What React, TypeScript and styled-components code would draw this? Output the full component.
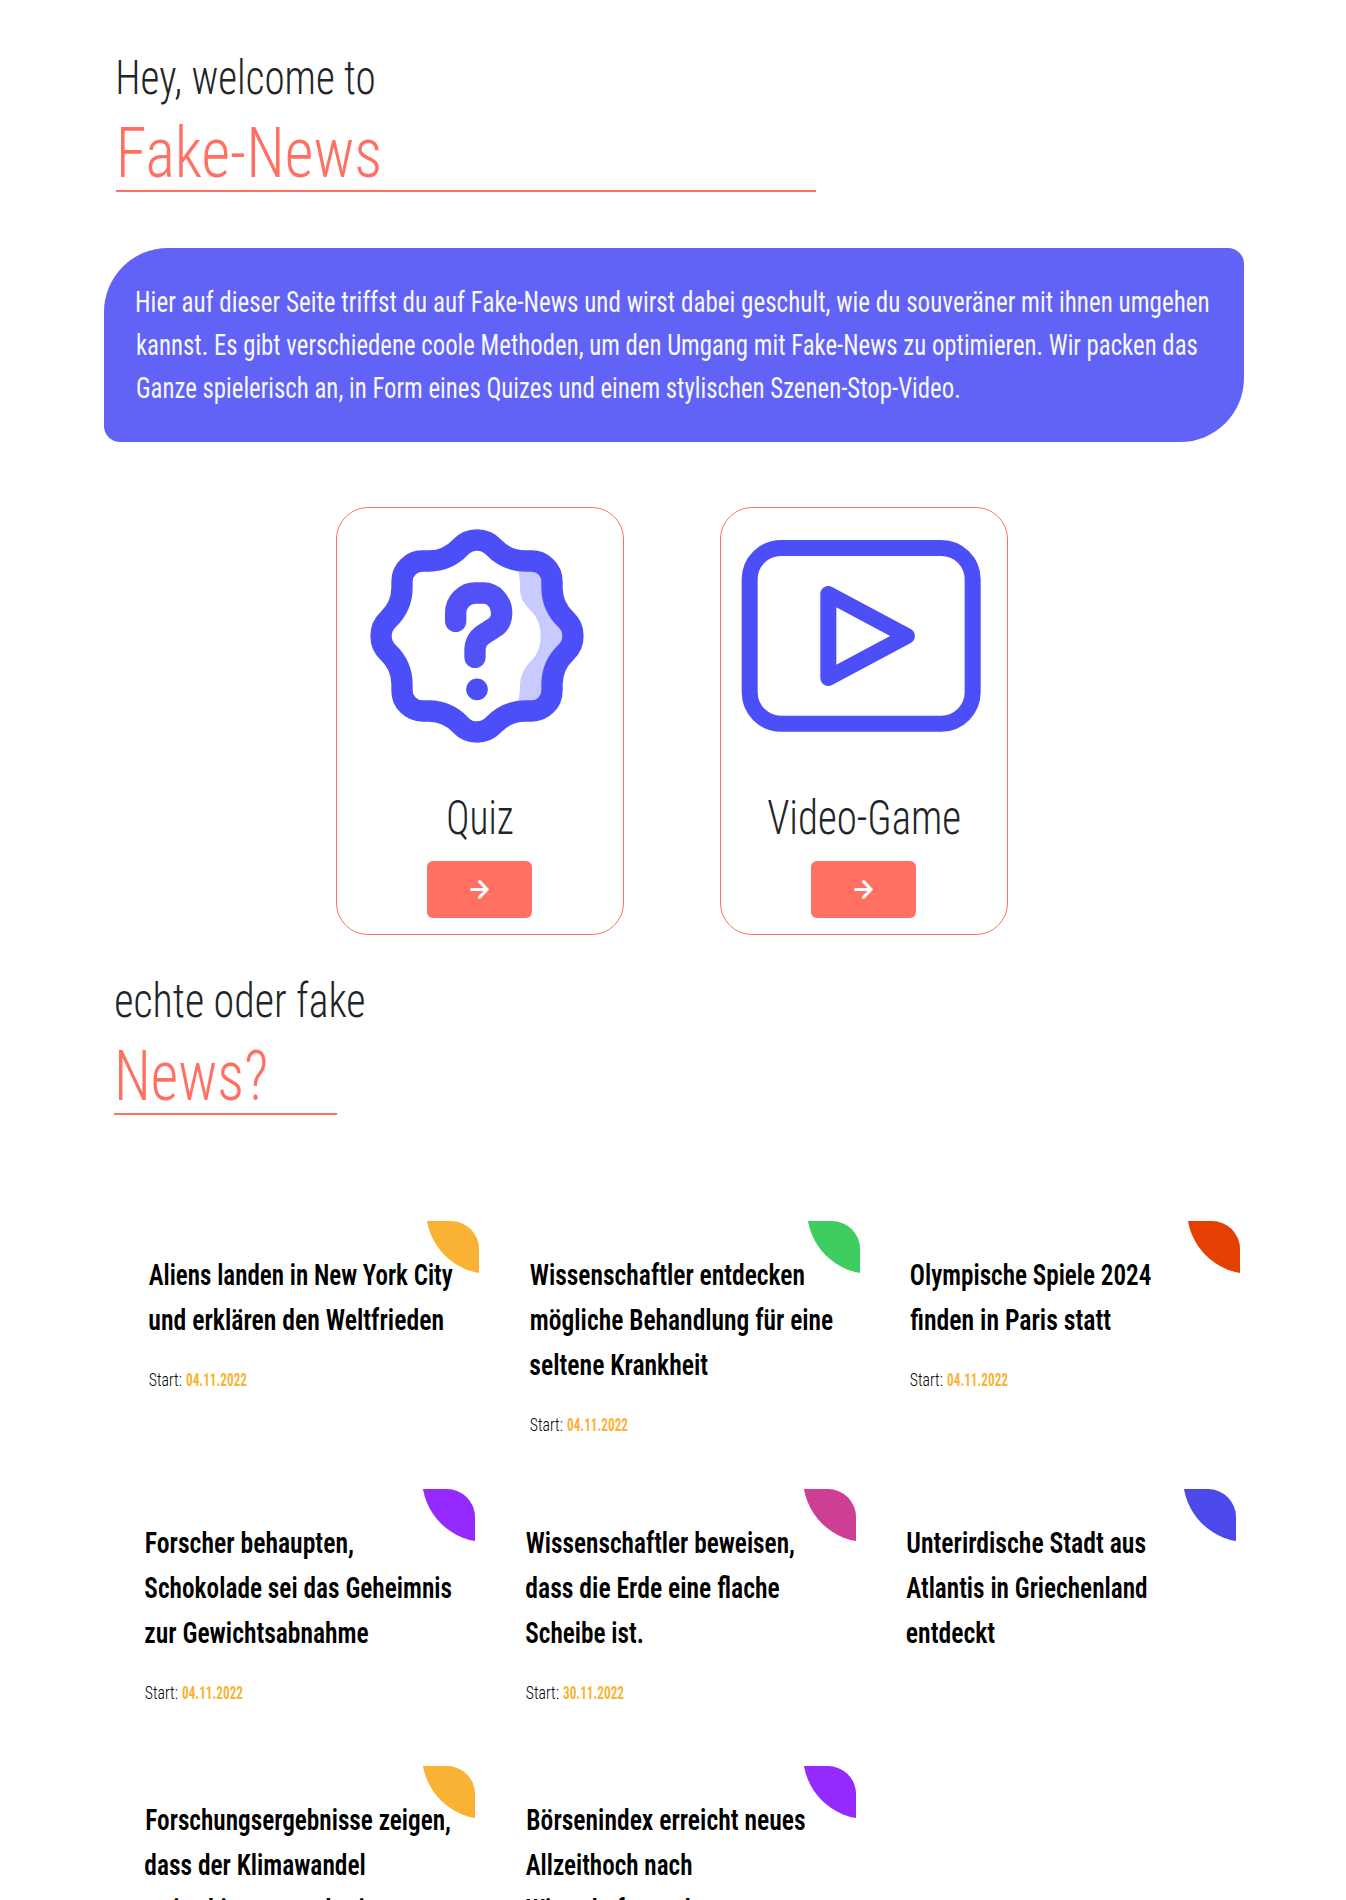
import React, { useLayoutEffect, useRef, useState } from "react";
import styled, { createGlobalStyle } from "styled-components";

const GlobalStyle = createGlobalStyle`
  *, *::before, *::after { box-sizing: border-box; }
  html, body { margin: 0; background: #fff; }
  body { font-family: "Roboto Condensed", Roboto, "Liberation Sans", sans-serif; color: #212529; height: 1900px; overflow: hidden; }
  h1, h2, h3, p { margin: 0; font-weight: inherit; }
`;

const coral = "#ff7062";
const indigo = "#4c4ef7";

/* One line of condensed type: the glyphs are narrowed to the given ink width. */
const LineBox = styled.span`
  display: block;
  white-space: nowrap;
  height: 1lh;
`;

const LineInk = styled.span`
  display: inline-block;
  transform-origin: 0 0;
`;

function Line({ w, off = 0, children }: { w: number; off?: number; children: string }) {
  const ref = useRef<HTMLSpanElement>(null);
  const [transform, setTransform] = useState("none");
  useLayoutEffect(() => {
    const el = ref.current;
    const ctx = document.createElement("canvas").getContext("2d");
    if (!el || !ctx) return;
    const cs = getComputedStyle(el);
    ctx.font = `${cs.fontWeight} ${cs.fontSize} ${cs.fontFamily}`;
    const m = ctx.measureText(children);
    const scale = w / (m.actualBoundingBoxLeft + m.actualBoundingBoxRight);
    const x = off + m.actualBoundingBoxLeft * scale;
    const y = parseFloat(cs.fontSize) * 0.065;
    setTransform(`translate(${x}px, ${y}px) scaleX(${scale})`);
  }, [w, off, children]);
  return (
    <LineBox>
      <LineInk ref={ref} style={{ transform }}>{children}</LineInk>
    </LineBox>
  );
}

const Page = styled.main`
  display: flex;
  flex-direction: column;
  width: 1346px;
  height: 1900px;
  overflow: hidden;
  > * { flex-shrink: 0; }
`;

const Heading = styled.header<{ $left: number; $width: number; $top: number }>`
  margin: ${(p) => p.$top}px 0 0 ${(p) => p.$left}px;
  width: ${(p) => p.$width}px;
  height: 145px;
  border-bottom: 2px solid ${coral};
  font-weight: 300;
`;

const Kicker = styled.h2`
  height: 58px;
  font-size: 47.3px;
  line-height: 56px;
`;

const Title = styled.h1`
  font-size: 71px;
  line-height: 86px;
  height: 85px;
  color: ${coral};
`;

const Intro = styled.section`
  margin: 56px 0 0 104px;
  width: 1140px;
  height: 194px;
  padding: 31px 32px;
  border-radius: 64px 16px;
  background: #6162f6;
  color: #f8f8ff;
  font-size: 29px;
  line-height: 43px;
`;

const Games = styled.section`
  display: flex;
  gap: 96px;
  margin: 65px 0 0 336px;
`;

const GameCard = styled.article`
  display: flex;
  flex-direction: column;
  align-items: center;
  width: 288px;
  height: 428px;
  border: 1px solid ${coral};
  border-radius: 32px;
`;

const Art = styled.div`
  width: 100%;
  height: 279px;
  svg { display: block; width: 286px; height: 279px; }
`;

const GameName = styled.h3<{ $width: number }>`
  width: ${(p) => p.$width}px;
  height: 74px;
  font-size: 47.3px;
  font-weight: 300;
  line-height: 56px;
`;

const GoButton = styled.button`
  display: flex;
  align-items: center;
  justify-content: center;
  width: 105px;
  height: 57px;
  margin-right: 1px;
  padding: 0;
  border: 0;
  border-radius: 6px;
  background: ${coral};
  svg { display: block; width: 19px; height: 19px; }
`;

const Row = styled.section<{ $left: number; $top: number }>`
  display: grid;
  grid-template-columns: repeat(3, 351px);
  column-gap: 29.5px;
  margin: ${(p) => p.$top}px 0 0 ${(p) => p.$left}px;
  height: 247px;
`;

const NewsCard = styled.article`
  position: relative;
  height: 247px;
  padding: 30px 20px;
  overflow: hidden;
  border-radius: 28px;
  color: #000;
`;

const Leaf = styled.div<{ $color: string }>`
  position: absolute;
  top: -75px;
  right: -75px;
  width: 128px;
  height: 128px;
  border-radius: 50%;
  background: ${(p) => p.$color};
`;

const NewsTitle = styled.h3`
  position: relative;
  margin-bottom: 25px;
  font-size: 29.5px;
  font-weight: 600;
  line-height: 45px;
`;

const DateRow = styled.p`
  display: grid;
  grid-template-columns: 37px auto;
  font-size: 17.7px;
  font-weight: 300;
  line-height: 27px;
`;

const DateValue = styled.span`
  color: #f9b234;
  font-weight: 700;
`;

const Arrow = () => (
  <svg viewBox="0 0 19 19" fill="none" stroke="#fff" strokeWidth="3.1" strokeLinecap="round" strokeLinejoin="round">
    <path d="M1.6 9.5H17M9.6 1.7L17.2 9.5L9.6 17.2" />
  </svg>
);

const QuizArt = () => (
  <svg viewBox="51 54 858 837">
    <path
      fill="#c9caff"
      d="M592 235Q600 258 600 280V298C600 330 620 350 635 365C671 400 671 475 635 511C612 534 600 558 600 590Q600 615 592 645L635 663A60 60 0 0 0 696 602V582A133 133 0 0 1 737 488A66 66 0 0 0 737 388A133 133 0 0 1 696 294V274A60 60 0 0 0 635 213Z"
    />
    <path
      fill="none"
      stroke={indigo}
      strokeWidth="64"
      d="M421 172A68 68 0 0 1 521 172A133 133 0 0 0 615 213H635A61 61 0 0 1 696 274V294A133 133 0 0 0 737 388A68 68 0 0 1 737 488A133 133 0 0 0 696 582V602A61 61 0 0 1 635 663H615A133 133 0 0 0 521 704A68 68 0 0 1 421 704A133 133 0 0 0 327 663H307A61 61 0 0 1 246 602V582A133 133 0 0 0 205 488A68 68 0 0 1 205 388A133 133 0 0 0 246 294V274A61 61 0 0 1 307 213H327A133 133 0 0 0 421 172Z"
    />
    <path
      fill="none"
      stroke="#5251f8"
      strokeWidth="64"
      strokeLinecap="round"
      strokeLinejoin="round"
      d="M407 394V370A59 60 0 0 1 466 309H491A54 61 0 0 1 545 370Q544 399 525 411L489 434Q465 451 465 482V502"
    />
    <circle cx="471" cy="598" r="32.5" fill={indigo} />
  </svg>
);

const VideoArt = () => (
  <svg viewBox="63 54 858 837" fill="none" stroke={indigo} strokeWidth="48" strokeLinejoin="round">
    <rect x="149" y="174" width="669" height="527" rx="94" />
    <path d="M385 312V564L621 438Z" />
  </svg>
);

type Text = [string, number, number?];
type News = { color: string; lines: Text[]; date?: string };

const rows: { left: number; top: number; items: News[] }[] = [
  {
    left: 128,
    top: 106,
    items: [
      { color: "#f9b234", lines: [["Aliens landen in New York City", 304], ["und erklären den Weltfrieden", 293.5, 0.5]], date: "04.11.2022" },
      { color: "#3ecd5e", lines: [["Wissenschaftler entdecken", 274], ["mögliche Behandlung für eine", 302.5, 1], ["seltene Krankheit", 178, 0.5]], date: "04.11.2022" },
      { color: "#e44002", lines: [["Olympische Spiele 2024", 240, 1], ["finden in Paris statt", 201, 0.5]], date: "04.11.2022" },
    ],
  },
  {
    left: 124,
    top: 21,
    items: [
      { color: "#952aff", lines: [["Forscher behaupten,", 207.5, 1], ["Schokolade sei das Geheimnis", 306.5, 0.5], ["zur Gewichtsabnahme", 223.5, 0.5]], date: "04.11.2022" },
      { color: "#cd3e94", lines: [["Wissenschaftler beweisen,", 268.5], ["dass die Erde eine flache", 253.5, 0.5], ["Scheibe ist.", 116.5, 0.5]], date: "30.11.2022" },
      { color: "#4c49ea", lines: [["Unterirdische Stadt aus", 238.5, 1.5], ["Atlantis in Griechenland", 240, 0.5], ["entdeckt", 88.5, 1]] },
    ],
  },
  {
    left: 124,
    top: 30,
    items: [
      { color: "#f9b234", lines: [["Forschungsergebnisse zeigen,", 304, 1.5], ["dass der Klimawandel", 219.5, 0.5], ["weiterhin voranschreitet", 248]] },
      { color: "#952aff", lines: [["Börsenindex erreicht neues", 278, 1.5], ["Allzeithoch nach", 165.5], ["Wirtschaftswachstum", 222]] },
    ],
  },
];

export default function App() {
  return (
    <>
      <GlobalStyle />
      <Page>
        <Heading $left={116} $width={700} $top={47}>
          <Kicker><Line w={255} off={2.8}>Hey, welcome to</Line></Kicker>
          <Title><Line w={258} off={5}>Fake-News</Line></Title>
        </Heading>
        <Intro>
          <p>
            <Line w={1072} off={0.8}>Hier auf dieser Seite triffst du auf Fake-News und wirst dabei geschult, wie du souveräner mit ihnen umgehen</Line>
            <Line w={1060} off={0.8}>kannst. Es gibt verschiedene coole Methoden, um den Umgang mit Fake-News zu optimieren. Wir packen das</Line>
            <Line w={822.5} off={0.8}>Ganze spielerisch an, in Form eines Quizes und einem stylischen Szenen-Stop-Video.</Line>
          </p>
        </Intro>
        <Games>
          <GameCard>
            <Art><QuizArt /></Art>
            <GameName $width={64}><Line w={64.5}>Quiz</Line></GameName>
            <GoButton aria-label="Quiz"><Arrow /></GoButton>
          </GameCard>
          <GameCard>
            <Art><VideoArt /></Art>
            <GameName $width={192}><Line w={191.5}>Video-Game</Line></GameName>
            <GoButton aria-label="Video-Game"><Arrow /></GoButton>
          </GameCard>
        </Games>
        <Heading $left={114} $width={223} $top={35}>
          <Kicker><Line w={248} off={2}>echte oder fake</Line></Kicker>
          <Title><Line w={147} off={5}>News?</Line></Title>
        </Heading>
        {rows.map((row, i) => (
          <Row key={i} $left={row.left} $top={row.top}>
            {row.items.map((item) => (
              <NewsCard key={item.lines[0][0]}>
                <Leaf $color={item.color} />
                <NewsTitle>
                  {item.lines.map(([text, w, off]) => (
                    <Line key={text} w={w} off={(off ?? 0) + 0.7}>{text}</Line>
                  ))}
                </NewsTitle>
                {item.date && (
                  <DateRow>
                    <Line w={32.5} off={0.8}>Start:</Line>
                    <DateValue><Line w={61} off={1}>{item.date}</Line></DateValue>
                  </DateRow>
                )}
              </NewsCard>
            ))}
          </Row>
        ))}
      </Page>
    </>
  );
}
